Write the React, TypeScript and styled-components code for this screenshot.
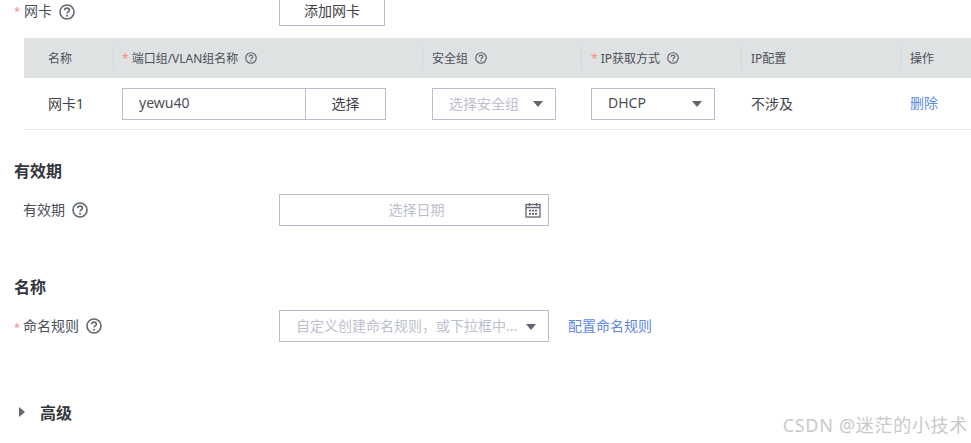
import React from 'react';
import styled, { createGlobalStyle } from 'styled-components';

const columns = '90px 309px 159px 160px 159px 1fr';
const border = '#b9bdcc';

const GlobalStyle = createGlobalStyle`
  html, body {
    margin: 0;
    padding: 0;
    background: #fff;
    overflow: hidden;
  }
  body {
    font-family: "Noto Sans", "Noto Sans CJK SC", sans-serif;
    font-size: 14px;
    color: #3f4248;
  }
`;

const Page = styled.div`
  position: relative;
  width: 971px;
  height: 443px;
  overflow: hidden;
`;

const Content = styled.div`
  display: flex;
  flex-direction: column;
  margin-top: -6px;
`;

const FormRow = styled.div<{ $top?: number }>`
  display: flex;
  align-items: center;
  height: 32px;
  margin-top: ${(p) => p.$top ?? 0}px;
`;

const Label = styled.div`
  display: flex;
  align-items: center;
  width: 279px;
  padding-left: 14px;
  box-sizing: border-box;
  font-size: 14px;
  color: #4c4f57;
`;

const LabelText = styled.span`
  padding-bottom: 2px;
`;

const Star = styled.span<{ $visible?: boolean; $width?: number }>`
  width: ${(p) => p.$width ?? 9}px;
  font-size: 11px;
  color: #f88a85;
  visibility: ${(p) => (p.$visible ? 'visible' : 'hidden')};
`;

const Button = styled.div`
  display: flex;
  align-items: center;
  justify-content: center;
  width: 106px;
  height: 32px;
  box-sizing: border-box;
  border: 1px solid ${border};
  font-size: 14px;
  color: #3f4248;
`;

const Table = styled.div`
  margin: 12px 0 0 24px;
`;

const HeaderRow = styled.div`
  display: grid;
  grid-template-columns: ${columns};
  align-items: center;
  height: 40px;
  background: #dfe2e3;
`;

const HeaderCell = styled.div<{ $divided?: boolean; $pad?: number }>`
  display: flex;
  align-items: center;
  height: 24px;
  padding-left: ${(p) => p.$pad ?? 9}px;
  border-right: ${(p) => (p.$divided === false ? '0' : '1px solid #d2d6de')};
  font-size: 12px;
  color: #4c4f57;
`;

const HeaderStar = styled.span`
  margin-right: 3px;
  color: #f88a85;
`;

const BodyRow = styled.div`
  display: grid;
  grid-template-columns: ${columns};
  align-items: center;
  height: 52px;
  box-sizing: border-box;
  border-bottom: 1px solid #e6e8ec;
`;

const BodyCell = styled.div<{ $pad?: number; $text?: boolean }>`
  display: flex;
  align-items: center;
  padding-left: ${(p) => p.$pad ?? 9}px;
  padding-bottom: ${(p) => (p.$text ? 2 : 0)}px;
  font-size: 14px;
  color: #3f4248;
`;

const InputGroup = styled.div`
  display: flex;
  width: 264px;
  height: 32px;
  box-sizing: border-box;
  border: 1px solid ${border};
`;

const InputValue = styled.div`
  flex: 1;
  display: flex;
  align-items: center;
  padding: 0 0 2px 16px;
  font-size: 14px;
  color: #4c4f57;
`;

const InputAction = styled.div`
  display: flex;
  align-items: center;
  justify-content: center;
  width: 80px;
  box-sizing: border-box;
  padding-bottom: 2px;
  border-left: 1px solid ${border};
  font-size: 14px;
  color: #3f4248;
`;

const Select = styled.div<{ $width: number }>`
  display: flex;
  align-items: center;
  justify-content: space-between;
  width: ${(p) => p.$width}px;
  height: 32px;
  box-sizing: border-box;
  padding: 0 12px 0 16px;
  border: 1px solid ${border};
`;

const SelectText = styled.span<{ $placeholder?: boolean }>`
  padding-bottom: 2px;
  font-size: 14px;
  color: ${(p) => (p.$placeholder ? '#bcc0cc' : '#4c4f57')};
  white-space: nowrap;
`;

const Caret = styled.span`
  width: 0;
  height: 0;
  margin-top: 1px;
  border-left: 5.5px solid transparent;
  border-right: 5.5px solid transparent;
  border-top: 6px solid #62656f;
`;

const DateInput = styled.div`
  position: relative;
  display: flex;
  align-items: center;
  justify-content: center;
  width: 270px;
  height: 32px;
  box-sizing: border-box;
  padding: 0 0 2px 5px;
  border: 1px solid ${border};
  font-size: 14px;
  color: #bcc0cc;
`;

const DateIcon = styled.svg`
  position: absolute;
  right: 7px;
  top: 7px;
`;

const Link = styled.span<{ $left?: number }>`
  margin-left: ${(p) => p.$left ?? 0}px;
  padding-bottom: 2px;
  font-size: 14px;
  color: #5f89e3;
`;

const SectionTitle = styled.h3<{ $top: number }>`
  margin: ${(p) => p.$top}px 0 0 14px;
  height: 22px;
  line-height: 22px;
  font-size: 16px;
  font-weight: 700;
  color: #33363c;
`;

const Advanced = styled.div`
  display: flex;
  align-items: center;
  margin: 59px 0 0 19px;
  height: 22px;
  font-size: 16px;
  font-weight: 700;
  color: #33363c;
`;

const AdvancedArrow = styled.span`
  width: 0;
  height: 0;
  margin-right: 15px;
  border-top: 5px solid transparent;
  border-bottom: 5px solid transparent;
  border-left: 6px solid #62656f;
`;

const Watermark = styled.div`
  position: absolute;
  right: 3px;
  bottom: 6px;
  font-size: 18px;
  color: #c9c9c9;
  letter-spacing: 0.7px;
  white-space: nowrap;
`;

const HelpSvg = styled.svg<{ $left: number; $drop: number }>`
  margin-left: ${(p) => p.$left}px;
  margin-top: ${(p) => p.$drop}px;
  flex: none;
`;

const Help = ({ size = 16, left = 8, drop = 0 }: { size?: number; left?: number; drop?: number }) => (
  <HelpSvg $left={left} $drop={drop} width={size} height={size} viewBox="0 0 16 16" fill="none">
    <circle cx="8" cy="8" r="7" stroke="#62656f" strokeWidth="1.6" />
    <path
      d="M5.6 6.3C5.6 4.9 6.7 4.1 8 4.1s2.4.9 2.4 2.1c0 1.7-2.4 1.7-2.4 3.4"
      stroke="#62656f"
      strokeWidth="1.6"
    />
    <circle cx="8" cy="11.8" r="1" fill="#62656f" />
  </HelpSvg>
);

const Calendar = () => (
  <DateIcon width="16" height="16" viewBox="0 0 16 16" fill="none">
    <rect x="1" y="2.5" width="14" height="12.5" stroke="#62656f" strokeWidth="1.3" />
    <path d="M1 5.5h14M4.5 1v3M11.5 1v3" stroke="#62656f" strokeWidth="1.3" />
    <path
      d="M4 7.8h2v1.7H4zM7 7.8h2v1.7H7zM10 7.8h2v1.7h-2zM4 11h2v1.7H4zM7 11h2v1.7H7zM10 11h2v1.7h-2z"
      fill="#62656f"
    />
  </DateIcon>
);

const App = () => (
  <Page>
    <GlobalStyle />
    <Content>
      <FormRow>
        <Label>
          <Star $visible $width={10}>*</Star>
          网卡
          <Help left={7} drop={4} />
        </Label>
        <Button>添加网卡</Button>
      </FormRow>

      <Table>
        <HeaderRow>
          <HeaderCell $pad={24}>名称</HeaderCell>
          <HeaderCell $pad={8}>
            <HeaderStar>*</HeaderStar>
            端口组/VLAN组名称
            <Help size={12} left={7} />
          </HeaderCell>
          <HeaderCell>
            安全组
            <Help size={12} left={7} />
          </HeaderCell>
          <HeaderCell>
            <HeaderStar>*</HeaderStar>
            IP获取方式
            <Help size={12} left={7} />
          </HeaderCell>
          <HeaderCell>IP配置</HeaderCell>
          <HeaderCell $divided={false}>操作</HeaderCell>
        </HeaderRow>
        <BodyRow>
          <BodyCell $pad={24} $text>网卡1</BodyCell>
          <BodyCell $pad={8}>
            <InputGroup>
              <InputValue>yewu40</InputValue>
              <InputAction>选择</InputAction>
            </InputGroup>
          </BodyCell>
          <BodyCell>
            <Select $width={124}>
              <SelectText $placeholder>选择安全组</SelectText>
              <Caret />
            </Select>
          </BodyCell>
          <BodyCell>
            <Select $width={124}>
              <SelectText>DHCP</SelectText>
              <Caret />
            </Select>
          </BodyCell>
          <BodyCell $text>不涉及</BodyCell>
          <BodyCell $text>
            <Link>删除</Link>
          </BodyCell>
        </BodyRow>
      </Table>

      <SectionTitle $top={30}>有效期</SectionTitle>
      <FormRow $top={12}>
        <Label>
          <Star />
          <LabelText>有效期</LabelText>
          <Help left={7} />
        </Label>
        <DateInput>
          选择日期
          <Calendar />
        </DateInput>
      </FormRow>

      <SectionTitle $top={50}>名称</SectionTitle>
      <FormRow $top={12}>
        <Label>
          <Star $visible>*</Star>
          <LabelText>命名规则</LabelText>
          <Help left={7} />
        </Label>
        <Select $width={270}>
          <SelectText $placeholder>自定义创建命名规则，或下拉框中...</SelectText>
          <Caret />
        </Select>
        <Link $left={19}>配置命名规则</Link>
      </FormRow>

      <Advanced>
        <AdvancedArrow />
        高级
      </Advanced>
    </Content>
    <Watermark>CSDN @迷茫的小技术</Watermark>
  </Page>
);

export default App;
